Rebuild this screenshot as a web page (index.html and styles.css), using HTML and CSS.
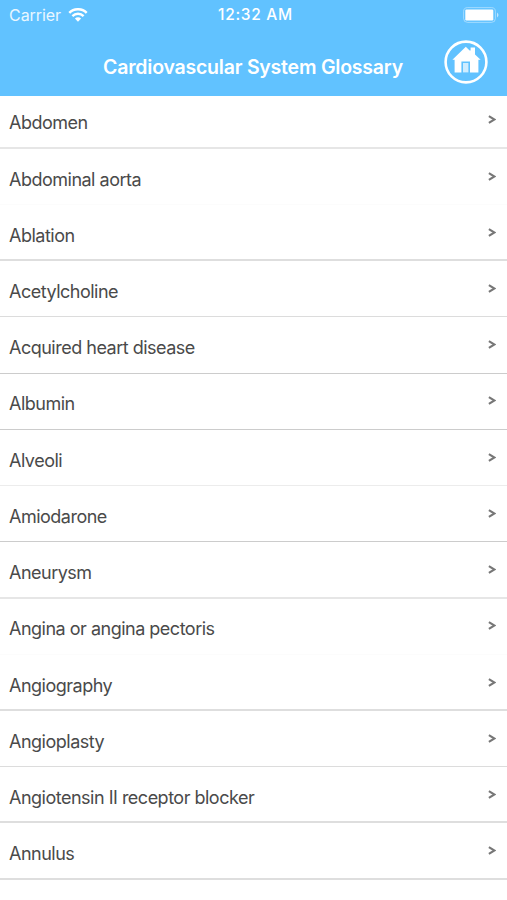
FILE: index.html
```html
<!DOCTYPE html>
<html lang="en">
<head>
	<meta charset="utf-8">
	<title>Cardiovascular System Glossary</title>
	<link rel="stylesheet" href="styles.css">
</head>
<body>
	<svg class="defs">
		<symbol id="arrow" viewBox="0 0 8 9">
			<path d="M.9 1.1L6.5 4.5.9 7.9" fill="none" stroke="#777" stroke-width="2.1"/>
		</symbol>
	</svg>

	<header class="top">
		<div class="status">
			<div class="carrier">
				<span>Carrier</span>
				<svg class="wifi" viewBox="0 0 20 14">
					<path d="M1.3 4.8a12.4 12.4 0 0 1 17.4 0" fill="none" stroke="#fff" stroke-width="2.5"/>
					<path d="M4.4 8.1a8 8 0 0 1 11.2 0" fill="none" stroke="#fff" stroke-width="2.4"/>
					<path d="M6.9 10.6a4.4 4.4 0 0 1 6.2 0L10 13.8z" fill="#fff"/>
				</svg>
			</div>
			<div class="clock">12:32 AM</div>
			<svg class="battery" viewBox="0 0 36 16">
				<rect x=".6" y=".6" width="31.8" height="14.8" rx="4" fill="none" stroke="#fff" stroke-opacity=".4"/>
				<rect x="2.3" y="2.5" width="28" height="11" rx="1.2" fill="#fff"/>
				<path d="M34 5.5q3 2.5 0 5z" fill="#fff" fill-opacity=".6"/>
			</svg>
		</div>
		<div class="bar">
			<h1>Cardiovascular System Glossary</h1>
			<svg class="home" viewBox="0 0 44 44">
				<circle cx="22" cy="22" r="20.4" fill="none" stroke="#fff" stroke-width="2.6"/>
				<path d="M21.8 6.8L8.4 19.8h2.2V32.4h6.8V21.6h8.6v10.8h8.4V19.8h2.2l-5.6-5.4V7.4h-4.4v3.2h-1z" fill="#fff"/>
				<path d="M19 32.4v-9.4h5.4v9.4z" fill="#fff" fill-opacity=".7"/>
			</svg>
		</div>
	</header>

	<ul class="glossary">
		<li class="soft"><span>Abdomen</span><svg class="arrow"><use href="#arrow"/></svg></li>
		<li class="none"><span>Abdominal aorta</span><svg class="arrow"><use href="#arrow"/></svg></li>
		<li class="wide"><span>Ablation</span><svg class="arrow"><use href="#arrow"/></svg></li>
		<li class="thin"><span>Acetylcholine</span><svg class="arrow"><use href="#arrow"/></svg></li>
		<li class="dark"><span>Acquired heart disease</span><svg class="arrow"><use href="#arrow"/></svg></li>
		<li class="dark"><span>Albumin</span><svg class="arrow"><use href="#arrow"/></svg></li>
		<li class="faint"><span>Alveoli</span><svg class="arrow"><use href="#arrow"/></svg></li>
		<li class="dark"><span>Amiodarone</span><svg class="arrow"><use href="#arrow"/></svg></li>
		<li class="soft"><span>Aneurysm</span><svg class="arrow"><use href="#arrow"/></svg></li>
		<li class="none"><span>Angina or angina pectoris</span><svg class="arrow"><use href="#arrow"/></svg></li>
		<li class="wide"><span>Angiography</span><svg class="arrow"><use href="#arrow"/></svg></li>
		<li class="thin"><span>Angioplasty</span><svg class="arrow"><use href="#arrow"/></svg></li>
		<li class="wide"><span>Angiotensin II receptor blocker</span><svg class="arrow"><use href="#arrow"/></svg></li>
		<li class="wide"><span>Annulus</span><svg class="arrow"><use href="#arrow"/></svg></li>
	</ul>
</body>
</html>
```
FILE: styles.css
```css
*{box-sizing:border-box;}
body{
	margin:0;
	height:900px;
	overflow:hidden;
	background:#fff;
	font-family:Inter, "Liberation Sans", sans-serif;
}
.defs{display:none;}

/* header */
.top{height:96px; background:#61c2ff; color:#fff;}
.status{
	display:grid;
	grid-template-columns:1fr auto 1fr;
	align-items:center;
	height:29px;
	padding:0 8px 0 9px;
	font-size:16px;
}
.carrier{display:flex; align-items:center; gap:7px; letter-spacing:-0.05px; color:#e9f7ff;}
.wifi{width:20px; height:14px;}
.clock{font-size:15.5px; font-weight:500; letter-spacing:0.7px; padding-left:3px;}
.battery{width:36px; height:16px; justify-self:end;}
.bar{
	display:grid;
	grid-template-columns:44px 1fr 44px;
	height:67px;
	padding:11px 19px 0;
}
.bar h1{
	grid-column:2;
	margin:15px 0 0 -1px;
	text-align:center;
	font-size:19.5px;
	line-height:24px;
	font-weight:600;
	letter-spacing:-0.22px;
	white-space:nowrap;
}
.home{width:44px; height:44px;}

/* list */
.glossary{list-style:none; margin:0; padding:0;}
.glossary li{
	display:flex;
	justify-content:space-between;
	height:56.22px;
	padding:18.8px 11px 0 9px;
	border-bottom:1px solid #ccc;
	font-size:18px;
	line-height:24px;
	letter-spacing:-0.5px;
	color:#4a4a4a;
}
.glossary li:first-child{height:52.8px; padding-top:15.3px;}
.glossary .soft{border-bottom:2px solid #e6e6e6;}
.glossary .wide{border-bottom:2px solid #dedede;}
.glossary .thin{border-bottom-color:#dcdcdc;}
.glossary .faint{border-bottom-color:#ececec;}
.glossary .none{border-bottom-color:#fcfcfc;}
.arrow{
	width:8px;
	height:9px;
	margin-top:4px;
}
```
